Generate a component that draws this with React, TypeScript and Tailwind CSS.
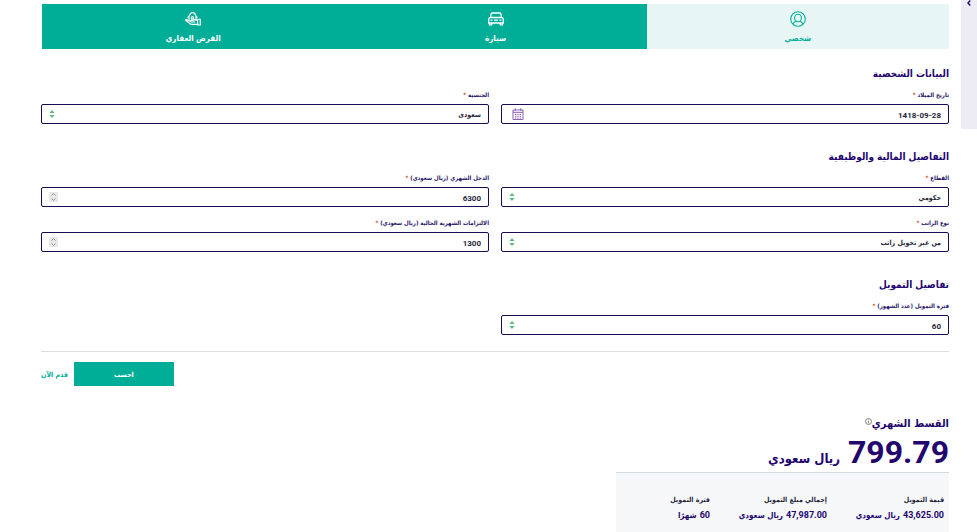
import type { ReactNode } from "react";

const arabic = "font-['DejaVu_Sans_Condensed','DejaVu_Sans',sans-serif]";
const latin = "font-[Roboto,'DejaVu_Sans',sans-serif]";

function PersonIcon() {
  return (
    <svg width="16" height="16" viewBox="0 0 16 16" fill="none" stroke="currentColor" strokeWidth="1.100" aria-hidden="true">
      <circle cx="8" cy="8" r="7.300" />
      <ellipse cx="8" cy="7" rx="3.400" ry="3.800" />
      <path d="M3 13.200c.3-1.700 1.400-2.500 3.200-2.900M13 13.200c-.3-1.700-1.400-2.500-3.200-2.900" />
    </svg>
  );
}

function CarIcon() {
  return (
    <svg width="16" height="14" viewBox="0 0 16 14" fill="none" stroke="currentColor" strokeWidth="1.300" strokeLinejoin="round" aria-hidden="true">
      <path d="M2.500 5.500 3.200 1.700Q3.400 1 4.100 1h7.800q.7 0 .9.700l.7 3.800" />
      <path d="M2 5.500h12q1.300.4 1.300 1.700v3.800H.7V7.200Q.7 5.900 2 5.500Z" />
      <path d="M1.500 11v1.800h2.300V11M12.200 11v1.800h2.300V11M2.500 8.200h2M11.500 8.200h2M6 8.200h4" />
    </svg>
  );
}

function HomeLoanIcon() {
  return (
    <svg width="16" height="14" viewBox="0 0 16 14" fill="none" stroke="currentColor" strokeWidth="1.200" strokeLinejoin="round" strokeLinecap="round" aria-hidden="true">
      <path d="M3 5.200 4.600 3.500Q5 .8 7.500.7t3 2.800l1.500 1.700M4 5v3.200M11 5v2.500" />
      <path d="M6.500 7.200V5.300q1-1.300 2 0v1.900Z" />
      <path d="M12.600 7.300h2.700v5.700h-2.700ZM12.600 8.300l-3-.6-1.800.8H5.800q-.9 1 .2 1.500h3.500" />
      <path d="M5.500 9.500.8 7.300q-.6.700.2 1.300l5 3.800h6.600" />
    </svg>
  );
}

function CalendarIcon() {
  return (
    <svg width="12" height="12" viewBox="0 0 12 12" fill="none" stroke="#8a5fb5" aria-hidden="true">
      <path d="M1 2h10v9.500H1ZM1 4.300h10M3.300.3v2.400M8.700.3v2.400" />
      <path d="M3 6.400h6M3 8.200h6M3 10h6" strokeDasharray="1.400 .9" />
    </svg>
  );
}

function Arrows() {
  return (
    <svg width="6" height="8" viewBox="0 0 6 8" fill="#5dbb78" aria-hidden="true">
      <path d="M3 0 5.600 3H.4ZM3 8 .4 5h5.200Z" />
    </svg>
  );
}

function Stepper() {
  return (
    <svg width="9" height="10" viewBox="0 0 9 10" fill="none" aria-hidden="true">
      <path d="M0 0h9v10H0Z" fill="#e9e9eb" />
      <path d="m2.500 3.500 2-2 2 2M2.500 6.500l2 2 2-2" stroke="#8c8c92" />
    </svg>
  );
}

function Tab({ icon, label, active = false }: { icon: ReactNode; label: string; active?: boolean }) {
  return (
    <button
      type="button"
      role="tab"
      aria-selected={active}
      className={`flex h-[45px] flex-1 flex-col items-center pt-[7px] text-[8px] font-bold leading-4 ${active ? "bg-[#e8f5f5] text-[#00ae98]" : "bg-[#00ae98] text-white"}`}
    >
      <span className="flex h-4 items-center">{icon}</span>
      <span className="mt-1">{label}</span>
    </button>
  );
}

const control =
  "block h-5 w-full appearance-none rounded-[2px] border border-[#1b0a55] bg-white pt-[3px] pr-[7px] pl-6 text-[#26263a] outline-none";

function Field({ id, label, adornment, children }: { id: string; label: string; adornment: ReactNode; children: ReactNode }) {
  return (
    <div>
      <label htmlFor={id} className="mb-[3px] block text-[6px] font-bold leading-3 text-[#24126a]">
        {label} <span className="text-[#c8502d]">*</span>
      </label>
      <div className="relative">
        {children}
        <span className="pointer-events-none absolute inset-y-0 left-2 flex items-center">{adornment}</span>
      </div>
    </div>
  );
}

function Choice({ id, label, value, numeric = false }: { id: string; label: string; value: string; numeric?: boolean }) {
  return (
    <Field id={id} label={label} adornment={<Arrows />}>
      <select id={id} className={`${control} ${numeric ? `text-[8px] font-bold ${latin}` : `text-[7px] font-bold ${arabic}`}`}>
        <option>{value}</option>
      </select>
    </Field>
  );
}

function Amount({ id, label, value }: { id: string; label: string; value: number }) {
  return (
    <Field id={id} label={label} adornment={<Stepper />}>
      <input id={id} type="number" defaultValue={value} className={`${control} text-right text-[8px] font-bold [appearance:textfield] ${latin}`} />
    </Field>
  );
}

function Section({ title, children }: { title: string; children: ReactNode }) {
  return (
    <section>
      <h2 className="mb-[7px] text-[10px] font-bold leading-4">{title}</h2>
      <div className="grid grid-cols-2 gap-x-3 gap-y-[10px]">{children}</div>
    </section>
  );
}

function Total({ label, amount, unit }: { label: string; amount: string; unit: string }) {
  return (
    <div className="w-[117px] shrink-0">
      <dt className="text-[7px] font-bold leading-3 text-[#26263a]">{label}</dt>
      <dd className="flex items-baseline gap-[3px] whitespace-nowrap pt-px text-[8px] font-bold leading-4">
        <span className={`text-[9px] ${latin}`}>{amount}</span>
        <span>{unit}</span>
      </dd>
    </div>
  );
}

export default function App() {
  return (
    <div dir="rtl" lang="ar" className={`flex items-start bg-white text-[#22066e] ${arabic}`}>
      <aside className="h-[129px] w-4 shrink-0 bg-[#edecf4]">
        <button type="button" aria-label="فتح القائمة" className="flex h-[6px] w-full items-center justify-center">
          <svg width="4" height="6" viewBox="0 0 4 6" fill="none" stroke="#22066e" strokeWidth="1.400" aria-hidden="true">
            <path d="M3.300.5.900 3l2.400 2.500" />
          </svg>
        </button>
      </aside>
      <main className="min-w-0 flex-1 pr-3 pl-[41px] pt-1">
        <div role="tablist" className="flex pl-px">
          <Tab icon={<PersonIcon />} label="شخصي" active />
          <Tab icon={<CarIcon />} label="سيارة" />
          <Tab icon={<HomeLoanIcon />} label="القرض العقاري" />
        </div>

        <form className="mt-[17px]" onSubmit={(e) => e.preventDefault()}>
          <div className="flex flex-col gap-[25px]">
            <Section title="البيانات الشخصية">
              <Field id="birth" label="تاريخ الميلاد" adornment={<span className="pl-[3px]"><CalendarIcon /></span>}>
                <input id="birth" type="text" dir="ltr" defaultValue="1418-09-28" className={`${control} text-right text-[8px] font-bold ${latin}`} />
              </Field>
              <Choice id="nationality" label="الجنسية" value="سعودى" />
            </Section>
            <Section title="التفاصيل المالية والوظيفية">
              <Choice id="sector" label="القطاع" value="حكومي" />
              <Amount id="income" label="الدخل الشهري (ريال سعودي)" value={6300} />
              <Choice id="salary" label="نوع الراتب" value="من غير تحويل راتب" />
              <Amount id="obligations" label="الالتزامات الشهرية الحالية (ريال سعودي)" value={1300} />
            </Section>
            <Section title="تفاصيل التمويل">
              <Choice id="period" label="فترة التمويل (عدد الشهور)" value="60" numeric />
            </Section>
          </div>
          <div className="mt-4 flex items-center justify-end gap-[6px] border-t border-[#dedee2] pt-[10px]">
            <button type="submit" className="h-6 w-[100px] bg-[#00ae98] pt-[3px] text-[7px] font-bold text-white">
              احسب
            </button>
            <a href="#apply" className="pt-[3px] text-[7px] font-bold text-[#00ae98]">
              قدم الآن
            </a>
          </div>
        </form>

        <section className="mt-7">
          <h2 className="flex items-start text-[11px] font-bold leading-5">
            القسط الشهري
            <svg width="7" height="7" viewBox="0 0 7 7" fill="none" stroke="#555" strokeWidth=".7" className="mt-1" aria-hidden="true">
              <circle cx="3.500" cy="3.500" r="3" />
              <path d="M3.500 1.500v.8M3.500 3v2.300" />
            </svg>
          </h2>
          <p className="flex h-[38px] items-baseline gap-2 whitespace-nowrap font-bold">
            <span className={`text-[32px] leading-9 ${latin}`}>799.79</span>
            <span className="text-[13px]">ريال سعودي</span>
          </p>
          <dl className="flex w-[333px] overflow-hidden border-t border-[#d3dade] bg-[#f6f7f9] px-[5px] pt-[21px] pb-[9px]">
            <Total label="قيمة التمويل" amount="43,625.00" unit="ريال سعودي" />
            <Total label="إجمالي مبلغ التمويل" amount="47,987.00" unit="ريال سعودي" />
            <Total label="فترة التمويل" amount="60" unit="شهرًا" />
          </dl>
        </section>
      </main>
    </div>
  );
}
